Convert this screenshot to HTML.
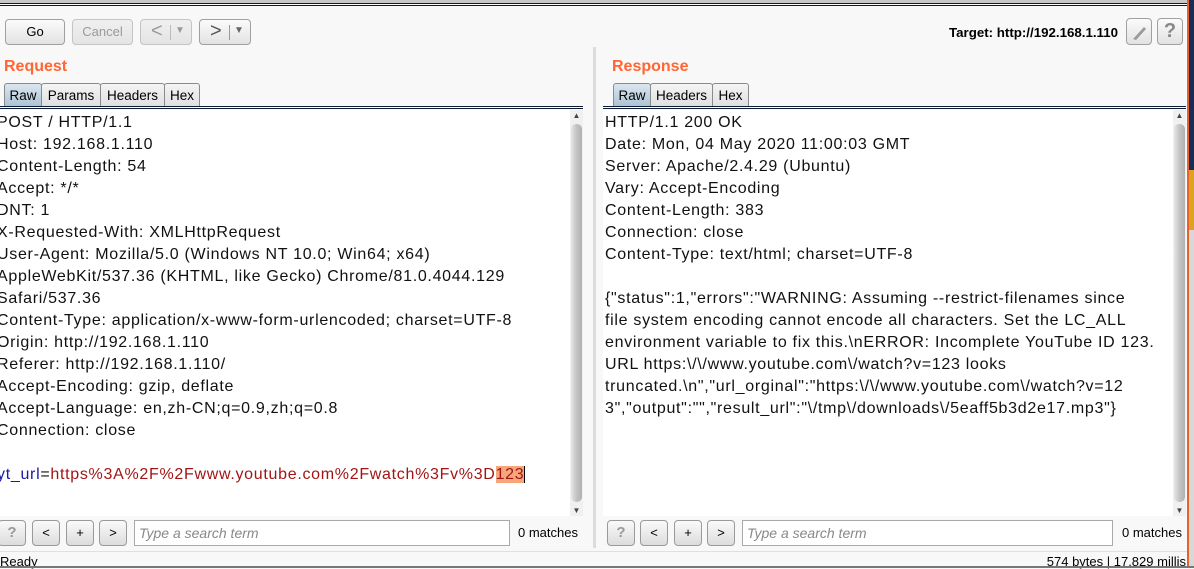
<!DOCTYPE html>
<html><head><meta charset="utf-8"><style>
*{box-sizing:border-box;margin:0;padding:0}
body{width:1194px;height:568px;overflow:hidden;background:#f8f8f8;font-family:"Liberation Sans",Arial,sans-serif;position:relative}
.a{position:absolute}
.btn{position:absolute;border:1px solid #a0a0a0;border-radius:4px;background:linear-gradient(#fbfbfb,#e2e2e2);font-size:13px;color:#000;text-align:center}
.dis{color:#9a9a9a;border-color:#c4c4c4;background:linear-gradient(#f0f0f0,#e4e4e4)}
.title{position:absolute;color:#ff6633;font-weight:bold;font-size:16px}
.tab{position:absolute;top:83px;height:25px;border:1px solid #8a8a8a;border-bottom:none;border-radius:3px 3px 0 0;background:linear-gradient(#f4f4f4,#dedede);font-size:13.5px;line-height:23px;text-align:center}
.tab.sel{background:linear-gradient(#dbe6ef,#a9c0d3)}
.line2{position:absolute;height:3px;border-top:1px solid #0b1a35;border-bottom:1px solid #0b1a35;background:#fff}
.txt{position:absolute;top:110px;height:406px;background:#fff;font-size:16px;letter-spacing:0.7px;line-height:22px;color:#111;white-space:pre;overflow:hidden;padding-top:2px}
.sb{position:absolute;top:110px;width:13px;height:406px;background:#f0f0f0}
.sb .th{position:absolute;left:1px;right:1px;top:14px;bottom:14px;border-radius:5px;background:linear-gradient(90deg,#e6e6e6,#c4c4c4,#b0b0b0)}
.sb .ar{position:absolute;left:0;width:13px;font-size:8px;text-align:center;color:#444}
.sbtn{position:absolute;top:520px;height:26px;width:28px;border:1px solid #9a9a9a;border-radius:4px;background:linear-gradient(#fafafa,#dcdcdc);font-size:13px;text-align:center;line-height:24px}
.inp{position:absolute;top:520px;height:26px;border:1px solid #aaa;background:#fff;font-style:italic;color:#888;font-size:14px;line-height:24px;padding-left:4px}
.m{position:absolute;top:525px;font-size:13px}
</style></head><body>
<div class="a" style="left:0;top:0;width:1188px;height:3px;background:#c8c8c8"></div>
<div class="line2" style="left:0;top:3px;width:1188px"></div>

<div class="btn" style="left:5px;top:19px;width:60px;height:26px;line-height:24px">Go</div>
<div class="btn dis" style="left:72px;top:19px;width:61px;height:26px;line-height:24px">Cancel</div>
<div class="btn dis" style="left:140px;top:19px;width:52px;height:26px;line-height:22px;font-size:20px;text-align:left;padding-left:10px">&lt;<span style="position:absolute;left:29px;top:5px;height:15px;border-left:1px solid #bbb"></span><span style="position:absolute;left:34px;top:0;font-size:10px">▼</span></div>
<div class="btn" style="left:199px;top:19px;width:52px;height:26px;line-height:22px;font-size:20px;text-align:left;padding-left:10px;color:#555">&gt;<span style="position:absolute;left:29px;top:5px;height:15px;border-left:1px solid #999"></span><span style="position:absolute;left:34px;top:0;font-size:10px;color:#666">▼</span></div>

<div class="a" style="left:900px;top:25px;width:218px;text-align:right;font-weight:bold;font-size:13.3px">Target: http://192.168.1.110</div>
<div class="btn" style="left:1126px;top:18px;width:26px;height:27px"><svg width="24" height="25" viewBox="0 0 24 25"><path d="M7 19 L17 8 L19 10 L9 21 Z M6 20 l1 -1 l2 2 z" fill="#9a9a9a"/></svg></div>
<div class="btn" style="left:1157px;top:18px;width:26px;height:27px;font-size:20px;font-weight:bold;color:#888;line-height:25px">?</div>

<div class="a" style="left:1187px;top:0;width:2px;height:568px;background:#e8602a"></div>
<div class="a" style="left:1189px;top:0;width:5px;height:170px;background:#1a2c55"></div>
<div class="a" style="left:1189px;top:170px;width:5px;height:60px;background:#e0a020"></div>
<div class="a" style="left:1189px;top:230px;width:5px;height:338px;background:#d8d8d8"></div>

<div class="title" style="left:4px;top:58px">Request</div>
<div class="tab sel" style="left:4px;width:38px">Raw</div>
<div class="tab" style="left:41px;width:60px">Params</div>
<div class="tab" style="left:100px;width:65px">Headers</div>
<div class="tab" style="left:164px;width:36px">Hex</div>
<div class="line2" style="left:0;top:106px;width:583px"></div>

<div class="a" style="left:593px;top:47px;width:3px;height:501px;background:#dcdcdc"></div>

<div class="title" style="left:612px;top:58px">Response</div>
<div class="tab sel" style="left:613px;width:38px">Raw</div>
<div class="tab" style="left:650px;width:63px">Headers</div>
<div class="tab" style="left:712px;width:37px">Hex</div>
<div class="line2" style="left:603px;top:106px;width:583px"></div>

<div class="txt" style="left:0;width:570px"><div style="margin-left:-3px">POST / HTTP/1.1
Host: 192.168.1.110
Content-Length: 54
Accept: */*
DNT: 1
X-Requested-With: XMLHttpRequest
User-Agent: Mozilla/5.0 (Windows NT 10.0; Win64; x64)
AppleWebKit/537.36 (KHTML, like Gecko) Chrome/81.0.4044.129
Safari/537.36
Content-Type: application/x-www-form-urlencoded; charset=UTF-8
Origin: http://192.168.1.110
Referer: http://192.168.1.110/
Accept-Encoding: gzip, deflate
Accept-Language: en,zh-CN;q=0.9,zh;q=0.8
Connection: close

<span style="color:#1a1aa6">yt_url</span>=<span style="color:#a31515">https%3A%2F%2Fwww.youtube.com%2Fwatch%3Fv%3D<span style="background:#f6a67a">123</span></span><span style="border-left:1px solid #000"></span></div></div>
<div class="sb" style="left:570px"><div class="ar" style="top:1px">▲</div><div class="th"></div><div class="ar" style="bottom:1px">▼</div></div>

<div class="txt" style="left:603px;width:570px;padding-left:2px">HTTP/1.1 200 OK
Date: Mon, 04 May 2020 11:00:03 GMT
Server: Apache/2.4.29 (Ubuntu)
Vary: Accept-Encoding
Content-Length: 383
Connection: close
Content-Type: text/html; charset=UTF-8

{"status":1,"errors":"WARNING: Assuming --restrict-filenames since
file system encoding cannot encode all characters. Set the LC_ALL
environment variable to fix this.\nERROR: Incomplete YouTube ID 123.
URL https:\/\/www.youtube.com\/watch?v=123 looks
truncated.\n","url_orginal":"https:\/\/www.youtube.com\/watch?v=12
3","output":"","result_url":"\/tmp\/downloads\/5eaff5b3d2e17.mp3"}</div>
<div class="sb" style="left:1173px"><div class="ar" style="top:1px">▲</div><div class="th"></div><div class="ar" style="bottom:1px">▼</div></div>

<div class="sbtn" style="left:-2px;color:#999;font-weight:bold;font-size:15px">?</div>
<div class="sbtn" style="left:32px">&lt;</div>
<div class="sbtn" style="left:66px">+</div>
<div class="sbtn" style="left:99px">&gt;</div>
<div class="inp" style="left:134px;width:376px">Type a search term</div>
<div class="m" style="left:518px">0 matches</div>

<div class="sbtn" style="left:607px;color:#999;font-weight:bold;font-size:15px">?</div>
<div class="sbtn" style="left:640px">&lt;</div>
<div class="sbtn" style="left:674px">+</div>
<div class="sbtn" style="left:707px">&gt;</div>
<div class="inp" style="left:742px;width:371px">Type a search term</div>
<div class="m" style="left:1122px">0 matches</div>

<div class="a" style="left:0;top:551px;width:1187px;height:1px;background:#e0e0e0"></div>
<div class="a" style="left:0;top:554px;font-size:13px">Ready</div>
<div class="a" style="left:900px;top:554px;width:286px;text-align:right;font-size:13px">574 bytes | 17,829 millis</div>
<div class="a" style="left:0;top:566px;width:1194px;height:2px;background:#777"></div>
</body></html>
